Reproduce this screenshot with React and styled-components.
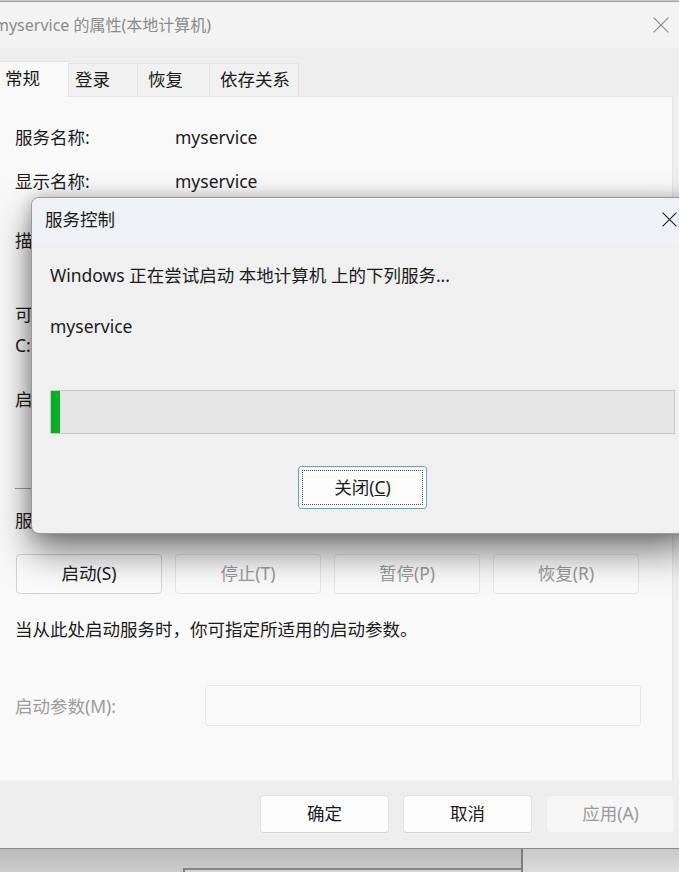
import React from "react"
import styled, { createGlobalStyle } from "styled-components"

const GlobalStyle = createGlobalStyle`
	html, body {
		margin: 0;
		padding: 0;
		background: #c9c9c9;
	}
	body {
		font-family: "Noto Sans", "Noto Sans CJK SC", sans-serif;
		font-size: 17.5px;
		color: #1b1b1b;
	}
	* {
		box-sizing: border-box;
	}
`

const Page = styled.div`
	position: relative;
	width: 679px;
	height: 872px;
	overflow: hidden;
	display: flex;
	flex-direction: column;
`

const Window = styled.div`
	height: 848px;
	margin-top: 1px;
	border-top: 1px solid #a2a2a2;
	border-bottom: 1px solid #8a8a8a;
	background: #eeeeee;
	display: flex;
	flex-direction: column;
`

const TitleBar = styled.div`
	height: 46px;
	flex-shrink: 0;
	background: #f3f3f3;
	display: flex;
	align-items: center;
	justify-content: space-between;
	padding-right: 10px;
`

const WindowTitle = styled.span`
	margin-left: -6px;
	font-size: 16px;
	line-height: 22px;
	color: #8b8b8b;
	white-space: nowrap;
`

const TabStrip = styled.div`
	height: 48px;
	flex-shrink: 0;
	display: flex;
	align-items: flex-end;
`

const Tab = styled.div`
	width: ${(p) => p.$w}px;
	height: ${(p) => (p.$active ? 36 : 33)}px;
	padding-left: ${(p) => p.$pl}px;
	padding-bottom: 3px;
	display: flex;
	align-items: center;
	background: ${(p) => (p.$active ? "#f9f9f9" : "#f1f1f1")};
	border-top: 1px solid #e4e4e4;
	border-right: 1px solid #e4e4e4;
	color: #1b1b1b;
	line-height: 24px;
	white-space: nowrap;
	margin-bottom: ${(p) => (p.$active ? -1 : 0)}px;
	position: relative;
`

const TabPanel = styled.div`
	flex: 1;
	margin-right: 6px;
	background: #f9f9f9;
	border-top: 1px solid #e4e4e4;
	border-right: 1px solid #e4e4e4;
	padding: 0 15px;
	display: flex;
	flex-direction: column;
`

const Line = styled.div`
	margin-top: ${(p) => p.$mt}px;
	height: 24px;
	line-height: 24px;
	display: flex;
	white-space: nowrap;
`

const Label = styled.span`
	width: 160px;
	flex-shrink: 0;
`

const Separator = styled.div`
	margin-top: 77px;
	height: 1px;
	background: #a0a0a0;
`

const ServiceButtons = styled.div`
	margin-top: 22px;
	margin-left: 1px;
	display: grid;
	grid-template-columns: repeat(4, 146px);
	column-gap: 13px;
`

const PanelButton = styled.div`
	height: 40px;
	padding-bottom: 2px;
	display: flex;
	align-items: center;
	justify-content: center;
	background: #fbfbfb;
	border: 1px solid ${(p) => (p.$disabled ? "#e6e6e6" : "#d2d2d2")};
	border-radius: 4px;
	color: ${(p) => (p.$disabled ? "#9a9a9a" : "#1b1b1b")};
	line-height: 24px;
`

const ParamRow = styled.div`
	margin-top: 44px;
	display: flex;
	align-items: center;
`

const ParamLabel = styled.span`
	width: 190px;
	color: #9c9c9c;
	line-height: 24px;
`

const ParamInput = styled.div`
	width: 436px;
	height: 41px;
	background: #fafafa;
	border: 1px solid #e8e8e8;
	border-radius: 3px;
`

const Footer = styled.div`
	height: 67px;
	flex-shrink: 0;
	display: flex;
	align-items: center;
	justify-content: flex-end;
	gap: 14px;
	padding: 0 4px 2px 0;
`

const FooterButton = styled.div`
	width: 129px;
	height: 38px;
	padding-bottom: 2px;
	display: flex;
	align-items: center;
	justify-content: center;
	background: ${(p) => (p.$disabled ? "#f6f6f6" : "#fdfdfd")};
	border: 1px solid ${(p) => (p.$disabled ? "#ececec" : "#e2e2e2")};
	border-bottom-color: ${(p) => (p.$disabled ? "#ececec" : "#d4d4d4")};
	border-radius: 4px;
	color: ${(p) => (p.$disabled ? "#9b9b9b" : "#1b1b1b")};
	line-height: 24px;
`

const DesktopStrip = styled.div`
	flex: 1;
	display: flex;
	background: linear-gradient(#c8c8c8, #dcdcdc);
`

const BackWindow = styled.div`
	width: 523px;
	border-right: 2px solid #7e7e7e;
	display: flex;
	flex-direction: column;
	justify-content: flex-end;
	background: linear-gradient(#b9b9b9, #cdcdcd);
`

const BackWindowEdge = styled.div`
	height: 4px;
	border-top: 2px solid #858585;
	background: #d6d6d6;
	margin-left: 183px;
	border-left: 2px solid #7e7e7e;
`

const Dialog = styled.div`
	position: absolute;
	left: 31px;
	top: 197px;
	width: 660px;
	height: 337px;
	border: 1px solid #9a9a9a;
	border-radius: 8px;
	overflow: hidden;
	display: flex;
	flex-direction: column;
	background: #f0f0f0;
	box-shadow: 0 18px 36px rgba(0, 0, 0, 0.5), 0 0 16px rgba(0, 0, 0, 0.22);
`

const DialogTitleBar = styled.div`
	height: 45px;
	flex-shrink: 0;
	background: #eef2f6;
	display: flex;
	align-items: center;
	justify-content: space-between;
	padding: 0 13px 3px 13px;
	line-height: 24px;
`

const DialogBody = styled.div`
	flex: 1;
	padding: 20px 15px 0 18px;
	display: flex;
	flex-direction: column;
`

const DialogText = styled.div`
	margin-top: ${(p) => p.$mt}px;
	height: 24px;
	line-height: 24px;
	white-space: nowrap;
`

const ProgressTrack = styled.div`
	margin-top: 52px;
	height: 44px;
	border: 1px solid #c6c6c6;
	background: #e6e6e6;
	display: flex;
`

const ProgressChunk = styled.div`
	background: #06b025;
`

const CloseButton = styled.div`
	position: relative;
	align-self: center;
	margin-top: 32px;
	width: 129px;
	height: 43px;
	padding-bottom: 2px;
	display: flex;
	align-items: center;
	justify-content: center;
	background: #fdfdfd;
	border: 1px solid #5aa6e8;
	border-radius: 3px;
	line-height: 24px;
	&::after {
		content: "";
		position: absolute;
		inset: 3px;
		border: 1px dotted #4d4d4d;
	}
`

const CloseX = ({ size, color }) => (
	<svg width={size} height={size} viewBox="0 0 16 16">
		<path d="M0.6 0.6L15.4 15.4M15.4 0.6L0.6 15.4" stroke={color} strokeWidth="1.15" fill="none" />
	</svg>
)

const tabs = [
	{ label: "常规", w: 69, pl: 5, active: true },
	{ label: "登录", w: 69, pl: 6 },
	{ label: "恢复", w: 72, pl: 10 },
	{ label: "依存关系", w: 89, pl: 10 },
]

export default function App() {
	const progress = 9

	return (
		<Page>
			<GlobalStyle />
			<Window>
				<TitleBar>
					<WindowTitle>myservice 的属性(本地计算机)</WindowTitle>
					<CloseX size={16} color="#8a8a8a" />
				</TitleBar>
				<TabStrip>
					{tabs.map((t) => (
						<Tab key={t.label} $w={t.w} $pl={t.pl} $active={t.active}>
							{t.label}
						</Tab>
					))}
				</TabStrip>
				<TabPanel>
					<Line $mt={28}>
						<Label>服务名称:</Label>
						<span>myservice</span>
					</Line>
					<Line $mt={20}>
						<Label>显示名称:</Label>
						<span>myservice</span>
					</Line>
					<Line $mt={35}>
						<Label>描述:</Label>
					</Line>
					<Line $mt={50}>
						<Label>可执行文件的路径:</Label>
					</Line>
					<Line $mt={7}>C:\myservice\myservice.exe</Line>
					<Line $mt={30}>
						<Label>启动类型:</Label>
					</Line>
					<Separator />
					<Line $mt={19}>
						<Label>服务状态:</Label>
					</Line>
					<ServiceButtons>
						<PanelButton>启动(S)</PanelButton>
						<PanelButton $disabled>停止(T)</PanelButton>
						<PanelButton $disabled>暂停(P)</PanelButton>
						<PanelButton $disabled>恢复(R)</PanelButton>
					</ServiceButtons>
					<Line $mt={23}>当从此处启动服务时，你可指定所适用的启动参数。</Line>
					<ParamRow>
						<ParamLabel>启动参数(M):</ParamLabel>
						<ParamInput />
					</ParamRow>
				</TabPanel>
				<Footer>
					<FooterButton>确定</FooterButton>
					<FooterButton>取消</FooterButton>
					<FooterButton $disabled>应用(A)</FooterButton>
				</Footer>
			</Window>
			<DesktopStrip>
				<BackWindow>
					<BackWindowEdge />
				</BackWindow>
			</DesktopStrip>

			<Dialog>
				<DialogTitleBar>
					<span>服务控制</span>
					<CloseX size={15} color="#1b1b1b" />
				</DialogTitleBar>
				<DialogBody>
					<DialogText $mt={0}>Windows 正在尝试启动 本地计算机 上的下列服务...</DialogText>
					<DialogText $mt={27}>myservice</DialogText>
					<ProgressTrack>
						<ProgressChunk style={{ width: progress }} />
					</ProgressTrack>
					<CloseButton>
						关闭(<u>C</u>)
					</CloseButton>
				</DialogBody>
			</Dialog>
		</Page>
	)
}
